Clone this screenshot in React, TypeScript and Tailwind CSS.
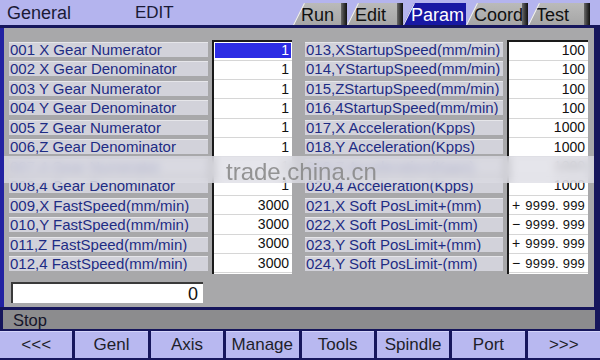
import React from "react";

const leftRows: [string, string][] = [
  ["001 X Gear Numerator", "1"],
  ["002 X Gear Denominator", "1"],
  ["003 Y Gear Numerator", "1"],
  ["004 Y Gear Denominator", "1"],
  ["005 Z Gear Numerator", "1"],
  ["006,Z Gear Denominator", "1"],
  ["007,4 Gear Numerator", "1"],
  ["008,4 Gear Denominator", "1"],
  ["009,X FastSpeed(mm/min)", "3000"],
  ["010,Y FastSpeed(mm/min)", "3000"],
  ["011,Z FastSpeed(mm/min)", "3000"],
  ["012,4 FastSpeed(mm/min)", "3000"],
];

const rightRows: [string, string, string][] = [
  ["013,XStartupSpeed(mm/min)", "", "100"],
  ["014,YStartupSpeed(mm/min)", "", "100"],
  ["015,ZStartupSpeed(mm/min)", "", "100"],
  ["016,4StartupSpeed(mm/min)", "", "100"],
  ["017,X Acceleration(Kpps)", "", "1000"],
  ["018,Y Acceleration(Kpps)", "", "1000"],
  ["019,Z Acceleration(Kpps)", "", "1000"],
  ["020,4 Acceleration(Kpps)", "", "1000"],
  ["021,X Soft PosLimit+(mm)", "+", "9999. 999"],
  ["022,X Soft PosLimit-(mm)", "−", "9999. 999"],
  ["023,Y Soft PosLimit+(mm)", "+", "9999. 999"],
  ["024,Y Soft PosLimit-(mm)", "−", "9999. 999"],
];

const tabs = [
  { name: "Run", w: "w-[54px]", active: false },
  { name: "Edit", w: "w-[56px]", active: false },
  { name: "Param", w: "w-[63px]", active: true },
  { name: "Coord", w: "w-[62px]", active: false },
  { name: "Test", w: "w-[62px]", active: false },
];

const buttons = ["<<<", "Genl", "Axis", "Manage", "Tools", "Spindle", "Port", ">>>"];

function Labels({ rows, w }: { rows: string[]; w: string }) {
  return (
    <div className={`flex flex-col ${w}`}>
      {rows.map((r) => (
        <div key={r} className="h-[19.5px] flex items-center">
          <div className="h-[15px] w-full bg-[#d2d2da] border-t border-[#e6e6ea] text-[15px] leading-[14px] text-[#1e2c84] pl-[1px] whitespace-nowrap overflow-hidden">
            {r}
          </div>
        </div>
      ))}
    </div>
  );
}

export default function App() {
  return (
    <div
      className="w-[600px] h-[360px] bg-[#16165c] flex flex-col overflow-hidden"
      style={{ fontFamily: '"Liberation Sans", Arial, sans-serif' }}
    >
      {/* top bar */}
      <div className="h-[25px] bg-[#b4b4ee] flex items-end relative">
        <div className="absolute left-[7px] top-[3px] text-[18px] leading-[20px] text-[#1a1a36]">General</div>
        <div className="absolute left-[135px] top-[3px] text-[17px] leading-[20px] text-[#1a1a36]">EDIT</div>
        <div className="ml-[293px] flex h-[22px]">
          {tabs.map((t) => (
            <div
              key={t.name}
              className={`relative ${t.w} h-[22px] flex items-center [clip-path:polygon(11px_0,100%_0,100%_100%,0_100%)] ${
                t.active ? "bg-[#1818a4] text-white" : "bg-gradient-to-b from-[#bababa] to-[#a6a6a6] text-[#111]"
              }`}
            >
              <svg className="absolute left-0 top-0" width="12" height="22">
                <line x1="0" y1="22" x2="11" y2="0" stroke="#f4f4f4" strokeWidth="2" />
              </svg>
              <span className="pl-[8px] text-[18px] leading-[20px] mt-[2px] whitespace-nowrap">{t.name}</span>
              {!t.active && (
                <div className="absolute right-0 top-0 bottom-0 w-[6px] bg-gradient-to-r from-[#6a6a6a] to-[#111]" />
              )}
            </div>
          ))}
        </div>
      </div>
      <div className="h-[3px]" />

      {/* main panel */}
      <div className="h-[279px] flex">
        <div className="w-[4px] bg-[#2222a2]" />
        <div className="w-[590px] bg-[#a8a8aa] relative flex flex-col pl-[5px] pt-[11.5px]">
          <div className="flex">
            <Labels rows={leftRows.map((r) => r[0])} w="w-[199px]" />
            <div className="ml-[4px] w-[80px] h-[234px] bg-white border-t-2 border-l-2 border-[#1a1a1a] flex flex-col">
              {leftRows.map((r, i) => (
                <div key={r[0]} className="flex-1 border-b border-[#d6d6d6] flex items-center justify-end">
                  {i === 0 ? (
                    <div className="mx-[1px] h-[15px] w-full bg-[#2c2ce4] text-white text-[14px] leading-[15px] text-right pr-[2px]">
                      1
                    </div>
                  ) : (
                    <span className="text-[14px] leading-[15px] text-[#111] pr-[3px]">{r[1]}</span>
                  )}
                </div>
              ))}
            </div>
            <div className="ml-[13px]">
              <Labels rows={rightRows.map((r) => r[0])} w="w-[198px]" />
            </div>
            <div className="ml-[4px] w-[81px] h-[234px] bg-white border-t-2 border-l-2 border-[#1a1a1a] flex flex-col">
              {rightRows.map((r) => (
                <div key={r[0]} className="flex-1 border-b border-[#d6d6d6] flex items-center justify-between pl-[3px] pr-[3px] text-[#111]">
                  <span className="text-[14px] leading-[15px]">{r[1]}</span>
                  <span className={r[1] ? "text-[13px] leading-[15px] tracking-[0.2px]" : "text-[14px] leading-[15px]"}>{r[2]}</span>
                </div>
              ))}
            </div>
          </div>

          {/* input box */}
          <div className="mt-[8.5px] ml-[2px] w-[192px] h-[21px] bg-white border-t-2 border-l-2 border-[#3a3a3a] flex items-center justify-end pr-[5px] text-[18px] leading-[20px] text-[#111]">
            0
          </div>

          {/* watermark overlay */}
          <div className="absolute left-0 right-0 top-[128px] h-[27px] bg-[#dcdce4]/75 backdrop-blur-[4px]" />
          <div className="absolute left-[222px] top-[130px] text-[24px] leading-[28px] text-[#8a8a8a]/90">
            trade.china.cn
          </div>
        </div>
      </div>
      <div className="h-[3px]" />

      {/* status bar */}
      <div className="h-[19px] ml-[3px] mr-[5px] bg-[#8c8c8e] flex items-center">
        <span className="pl-[10px] text-[16.5px] leading-[18px] text-[#15152a]">Stop</span>
      </div>
      <div className="h-[2px]" />

      {/* buttons */}
      <div className="h-[27px] grid grid-cols-8 gap-[3px]">
        {buttons.map((b) => (
          <div
            key={b}
            className="bg-[#b8b8f0] border-t border-[#d4d4fa] flex items-center justify-center text-[17px] leading-[20px] text-[#1e1e2a]"
          >
            {b}
          </div>
        ))}
      </div>
    </div>
  );
}
